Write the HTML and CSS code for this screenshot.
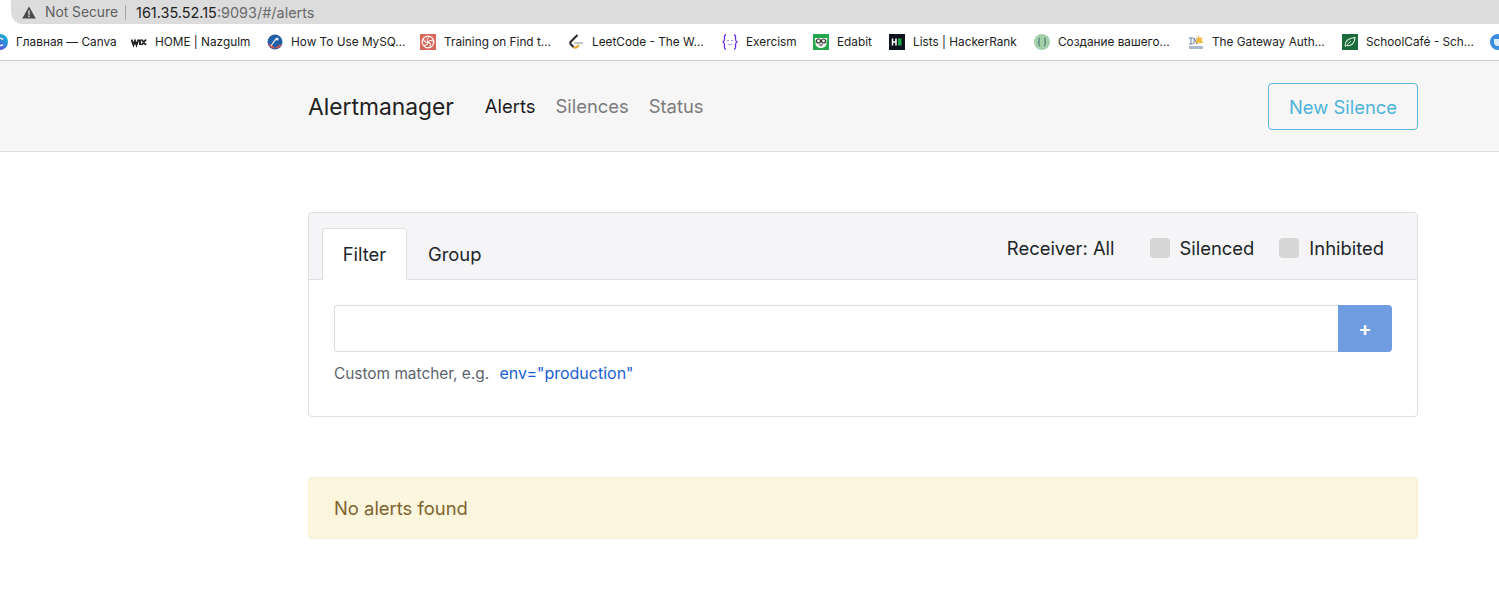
FILE: index.html
```html
<!DOCTYPE html>
<html lang="en">
<head>
<meta charset="utf-8">
<title>Alertmanager</title>
<link rel="stylesheet" href="styles.css">
</head>
<body>
<div class="chrome">
  <div class="addressbar">
    <svg class="warn" width="14" height="13" viewBox="0 0 14 13"><path d="M7 .5 13.800 12.600H.2Z" fill="#4a4a4a"/><rect x="6.300" y="4.400" width="1.400" height="4.400" fill="#dcdcdc"/><rect x="6.300" y="9.600" width="1.400" height="1.500" fill="#dcdcdc"/></svg>
    <span class="insecure">Not Secure</span>
    <span class="sep"></span>
    <span class="url"><span class="host">161.35.52.15</span>:9093/#/alerts</span>
  </div>
  <div class="bookmarks">
    <a class="bm"><svg class="ico" viewBox="0 0 16 16"><defs><linearGradient id="cv" x1="0" y1="1" x2="1" y2="0"><stop offset="0" stop-color="#7d2ae8"/><stop offset="1" stop-color="#00c4cc"/></linearGradient></defs><circle cx="8" cy="8" r="8" fill="url(#cv)"/><path d="M11 10.500a3.600 3.600 0 1 1 0-5" fill="none" stroke="#fff" stroke-width="1.400"/></svg><span class="w99">Главная — Canva</span></a>
    <a class="bm"><svg class="ico" viewBox="0 0 16 16"><path d="M.5 5.500 2.500 11 4 7l1.500 4 2-5.500M9 5.500V11M10.500 5.500l4.500 5.500M15 5.500 10.500 11" fill="none" stroke="#222" stroke-width="1.900"/></svg><span class="w96">HOME | Nazgulm</span></a>
    <a class="bm"><svg class="ico" viewBox="0 0 16 16"><circle cx="8" cy="8" r="7.500" fill="#1f5fa8"/><path d="M1 9.500A7.500 7.500 0 0 0 15 10l-3 1-4 3-3-3Z" fill="#c9534f"/><path d="M4 12c2-3 3-5 5-7" stroke="#dfe8f2" stroke-width="1.200" fill="none"/><circle cx="10" cy="5" r="1.600" fill="#dfe8f2"/></svg><span class="w113">How To Use MySQ…</span></a>
    <a class="bm"><svg class="ico" viewBox="0 0 16 16"><rect width="16" height="16" fill="#d9675c"/><circle cx="8" cy="8" r="5.800" fill="none" stroke="#fff" stroke-width="1.200"/><g fill="none" stroke="#fff" stroke-width="1"><path d="M8 8c-1.500-2-.5-4 1.500-5.500"/><path d="M8 8c-1.500-2-.5-4 1.500-5.500" transform="rotate(72 8 8)"/><path d="M8 8c-1.500-2-.5-4 1.500-5.500" transform="rotate(144 8 8)"/><path d="M8 8c-1.500-2-.5-4 1.500-5.500" transform="rotate(216 8 8)"/><path d="M8 8c-1.500-2-.5-4 1.500-5.500" transform="rotate(288 8 8)"/></g></svg><span class="w108">Training on Find t…</span></a>
    <a class="bm"><svg class="ico" viewBox="0 0 16 16"><path d="M9.500 1 3 7.500a2.200 2.200 0 0 0 0 3L5.500 13" fill="none" stroke="#2b2b2b" stroke-width="2.100"/><path d="M5.500 13a2.400 2.400 0 0 0 3.500 0L11 11" fill="none" stroke="#f0a030" stroke-width="2.100"/><path d="M6 9h9" stroke="#b5b5b5" stroke-width="1.600"/></svg><span class="w114">LeetCode - The W…</span></a>
    <a class="bm"><svg class="ico" viewBox="0 0 16 16"><path d="M4 1C2 1 2.500 3 2.500 5S2.500 7.500 1 8c1.500.5 1.500 1 1.500 3S2 15 4 15M12 1c2 0 1.500 2 1.500 4s0 2.500 1.500 3c-1.500.5-1.500 1-1.500 3s.5 4-1.500 4" fill="none" stroke="#6a2ee8" stroke-width="1.300"/><path d="M5 7l1-1 1 1M9 7l1-1 1 1M6 10c1 1.200 3 1.200 4 0" fill="none" stroke="#a68af0" stroke-width=".9"/></svg><span class="w51">Exercism</span></a>
    <a class="bm"><svg class="ico" viewBox="0 0 16 16"><rect width="16" height="16" fill="#22a84a"/><path d="M1.500 4h13l-1 3v3c0 2-2.500 4-5.500 4s-5.500-2-5.500-4V7Z" fill="#f3f3f0"/><circle cx="5.500" cy="7" r="2" fill="none" stroke="#333" stroke-width="1.100"/><circle cx="10.500" cy="7" r="2" fill="none" stroke="#333" stroke-width="1.100"/><path d="M6.500 11h3" stroke="#333" stroke-width="1.200"/></svg><span class="w36">Edabit</span></a>
    <a class="bm"><svg class="ico" viewBox="0 0 16 16"><rect width="16" height="16" fill="#0e141e"/><path d="M3.500 4.500v7M7 4.500v7M3.500 8H7" stroke="#fff" stroke-width="1.500"/><rect x="9" y="4.500" width="3.500" height="7" fill="#1ba94c"/></svg><span class="w105">Lists | HackerRank</span></a>
    <a class="bm"><svg class="ico" viewBox="0 0 16 16"><circle cx="8" cy="8" r="8" fill="#a3d0a8"/><path d="M6 4C4.500 4 5 6 5 7S5 8 4 8c1 0 1 .5 1 1s-.5 3 1 3M10 4c1.500 0 1 2 1 3s0 1 1 1c-1 0-1 .5-1 1s.5 3-1 3" fill="none" stroke="#44606a" stroke-width="1"/></svg><span class="w114">Создание вашего…</span></a>
    <a class="bm"><svg class="ico" viewBox="0 0 16 16"><path d="M1 4h4M3 4v6M1 10h4M6 10V4l3 6V4" fill="none" stroke="#6a7ea0" stroke-width="1"/><path d="M10.500 1l1 3 3-.5-1 2.500 2 3h-8l1-3Z" fill="#f4b93a"/><rect x="1" y="12" width="14" height="3" fill="#a9b8cc"/></svg><span class="w114">The Gateway Auth…</span></a>
    <a class="bm"><svg class="ico" viewBox="0 0 16 16"><rect width="16" height="16" fill="#1b6b3a"/><path d="M3 12c0-5 4-8 10-8.500C13 9 9 12.500 5 11.500" fill="none" stroke="#eaf3ea" stroke-width="1.100"/><path d="M3 13l6-6" stroke="#eaf3ea" stroke-width=".8"/></svg><span class="w108">SchoolCafé - Sch…</span></a>
    <a class="bm"><svg class="ico" viewBox="0 0 16 16"><circle cx="8" cy="8" r="8" fill="#3a8ee0"/><path d="M4 5v3a4 4 0 0 0 8 0V5Z" fill="#dcecfb"/></svg></a>
  </div>
</div>

<header class="navbar">
  <div class="container nav-row">
    <a class="brand">Alertmanager</a>
    <nav class="nav-links">
      <a class="nav-link active">Alerts</a>
      <a class="nav-link">Silences</a>
      <a class="nav-link">Status</a>
    </nav>
    <a class="btn-silence">New Silence</a>
  </div>
</header>

<main class="container content">
  <section class="card">
    <div class="card-header">
      <div class="tabs">
        <a class="tab active">Filter</a>
        <a class="tab">Group</a>
      </div>
      <div class="options">
        <span class="receiver">Receiver: All</span>
        <label class="check"><span class="box"></span>Silenced</label>
        <label class="check"><span class="box"></span>Inhibited</label>
      </div>
    </div>
    <div class="card-body">
      <div class="input-group">
        <input class="matcher" type="text" aria-label="Custom matcher">
        <button class="add" type="button">+</button>
      </div>
      <p class="hint">Custom matcher, e.g. <a class="example">env="production"</a></p>
    </div>
  </section>
  <div class="alert">No alerts found</div>
</main>
</body>
</html>
```
FILE: styles.css
```css
* { box-sizing: border-box; }
html, body { margin: 0; padding: 0; }
body {
  background: #fff;
  color: #212529;
  font-family: Inter, "Liberation Sans", sans-serif;
  height: 595px;
  overflow: hidden;
}

.chrome { height: 61px; border-bottom: 1px solid #c9c9c9; background: #fff; }
.addressbar {
  height: 24px;
  margin-left: 11px;
  padding-left: 11px;
  background: #dcdcdc;
  border-radius: 0 0 0 12px;
  display: flex;
  align-items: center;
}
.warn { flex: none; margin-right: 9px; }
.insecure { color: #5f5f5f; font-size: 13.8px; }
.sep { width: 1px; height: 15px; background: #a8a8a8; margin: 0 10px 0 7px; }
.url { color: #6a6a6a; font-size: 14.45px; }
.host { color: #222; }

.bookmarks {
  height: 36px;
  margin-left: -8px;
  display: flex;
  align-items: center;
  gap: 16px;
  overflow: hidden;
  white-space: nowrap;
  font-size: 11.8px;
  color: #222;
}
.bm { display: flex; align-items: center; gap: 8px; flex: none; }
.ico { width: 16px; height: 16px; flex: none; }
.w36 { width: 36px; }
.w51 { width: 51px; }
.w96 { width: 96px; }
.w99 { width: 99px; }
.w105 { width: 105px; }
.w108 { width: 108px; }
.w113 { width: 113px; }
.w114 { width: 114px; }

.container { width: 1110px; margin-left: 308px; }
.navbar {
  height: 91px;
  background: #f6f6f6;
  border-bottom: 1px solid #ddd;
}
.nav-row { height: 90px; display: flex; align-items: center; }
.brand { font-size: 22.8px; color: #212121; margin-right: 31px; }
.nav-links { display: flex; gap: 20px; font-size: 18.4px; }
.nav-link { color: #7b7b7b; }
.nav-link.active { color: #1c1c1c; }
.btn-silence {
  margin-left: auto;
  width: 150px;
  height: 47px;
  padding-top: 1px;
  display: flex;
  align-items: center;
  justify-content: center;
  border: 1px solid #5bb5d6;
  border-radius: 4px;
  color: #4fb3d9;
  font-size: 18.4px;
}

.content { padding-top: 60px; }
.card {
  height: 205px;
  border: 1px solid #dfdfdf;
  border-radius: 4px;
  overflow: hidden;
}
.card-header {
  height: 67px;
  background: #f5f5f7;
  border-bottom: 1px solid #dfdfdf;
  padding: 15px 33px 0 13px;
  display: flex;
  justify-content: space-between;
}
.tabs { display: flex; height: 52px; font-size: 18.4px; }
.tab {
  display: flex;
  align-items: center;
  justify-content: center;
  height: 52px;
  padding: 0 20px;
  color: #212529;
  border: 1px solid transparent;
  border-radius: 4px 4px 0 0;
}
.tab.active { width: 85px; padding: 0; background: #fff; border-color: #dfdfdf #dfdfdf #fff; }
.options { display: flex; align-items: center; height: 40px; font-size: 18.4px; }
.receiver { margin-right: 35px; }
.check { display: flex; align-items: center; gap: 10px; margin-left: 25px; }
.receiver + .check { margin-left: 0; }
.box { width: 20px; height: 20px; background: #d6d6d6; border-radius: 4px; }

.card-body { padding: 25px 25px 0; }
.input-group { display: flex; height: 47px; }
.matcher {
  flex: 1;
  min-width: 0;
  border: 1px solid #dcdcdc;
  border-right: 0;
  border-radius: 4px 0 0 4px;
  background: #fff;
}
.add {
  width: 54px;
  border: 0;
  border-radius: 0 4px 4px 0;
  background: #6f9ce0;
  color: #fff;
  font-family: inherit;
  font-size: 20px;
  font-weight: 600;
}
.hint { margin: 11px 0 0; font-size: 15.4px; color: #5d646b; }
.example { color: #1a62d0; font-size: 16px; margin-left: 6px; }

.alert {
  height: 62px;
  margin-top: 60px;
  padding-left: 25px;
  display: flex;
  align-items: center;
  background: #fcf6df;
  border: 1px solid #f9f0cf;
  border-radius: 4px;
  color: #7f6430;
  font-size: 18.4px;
}
```
